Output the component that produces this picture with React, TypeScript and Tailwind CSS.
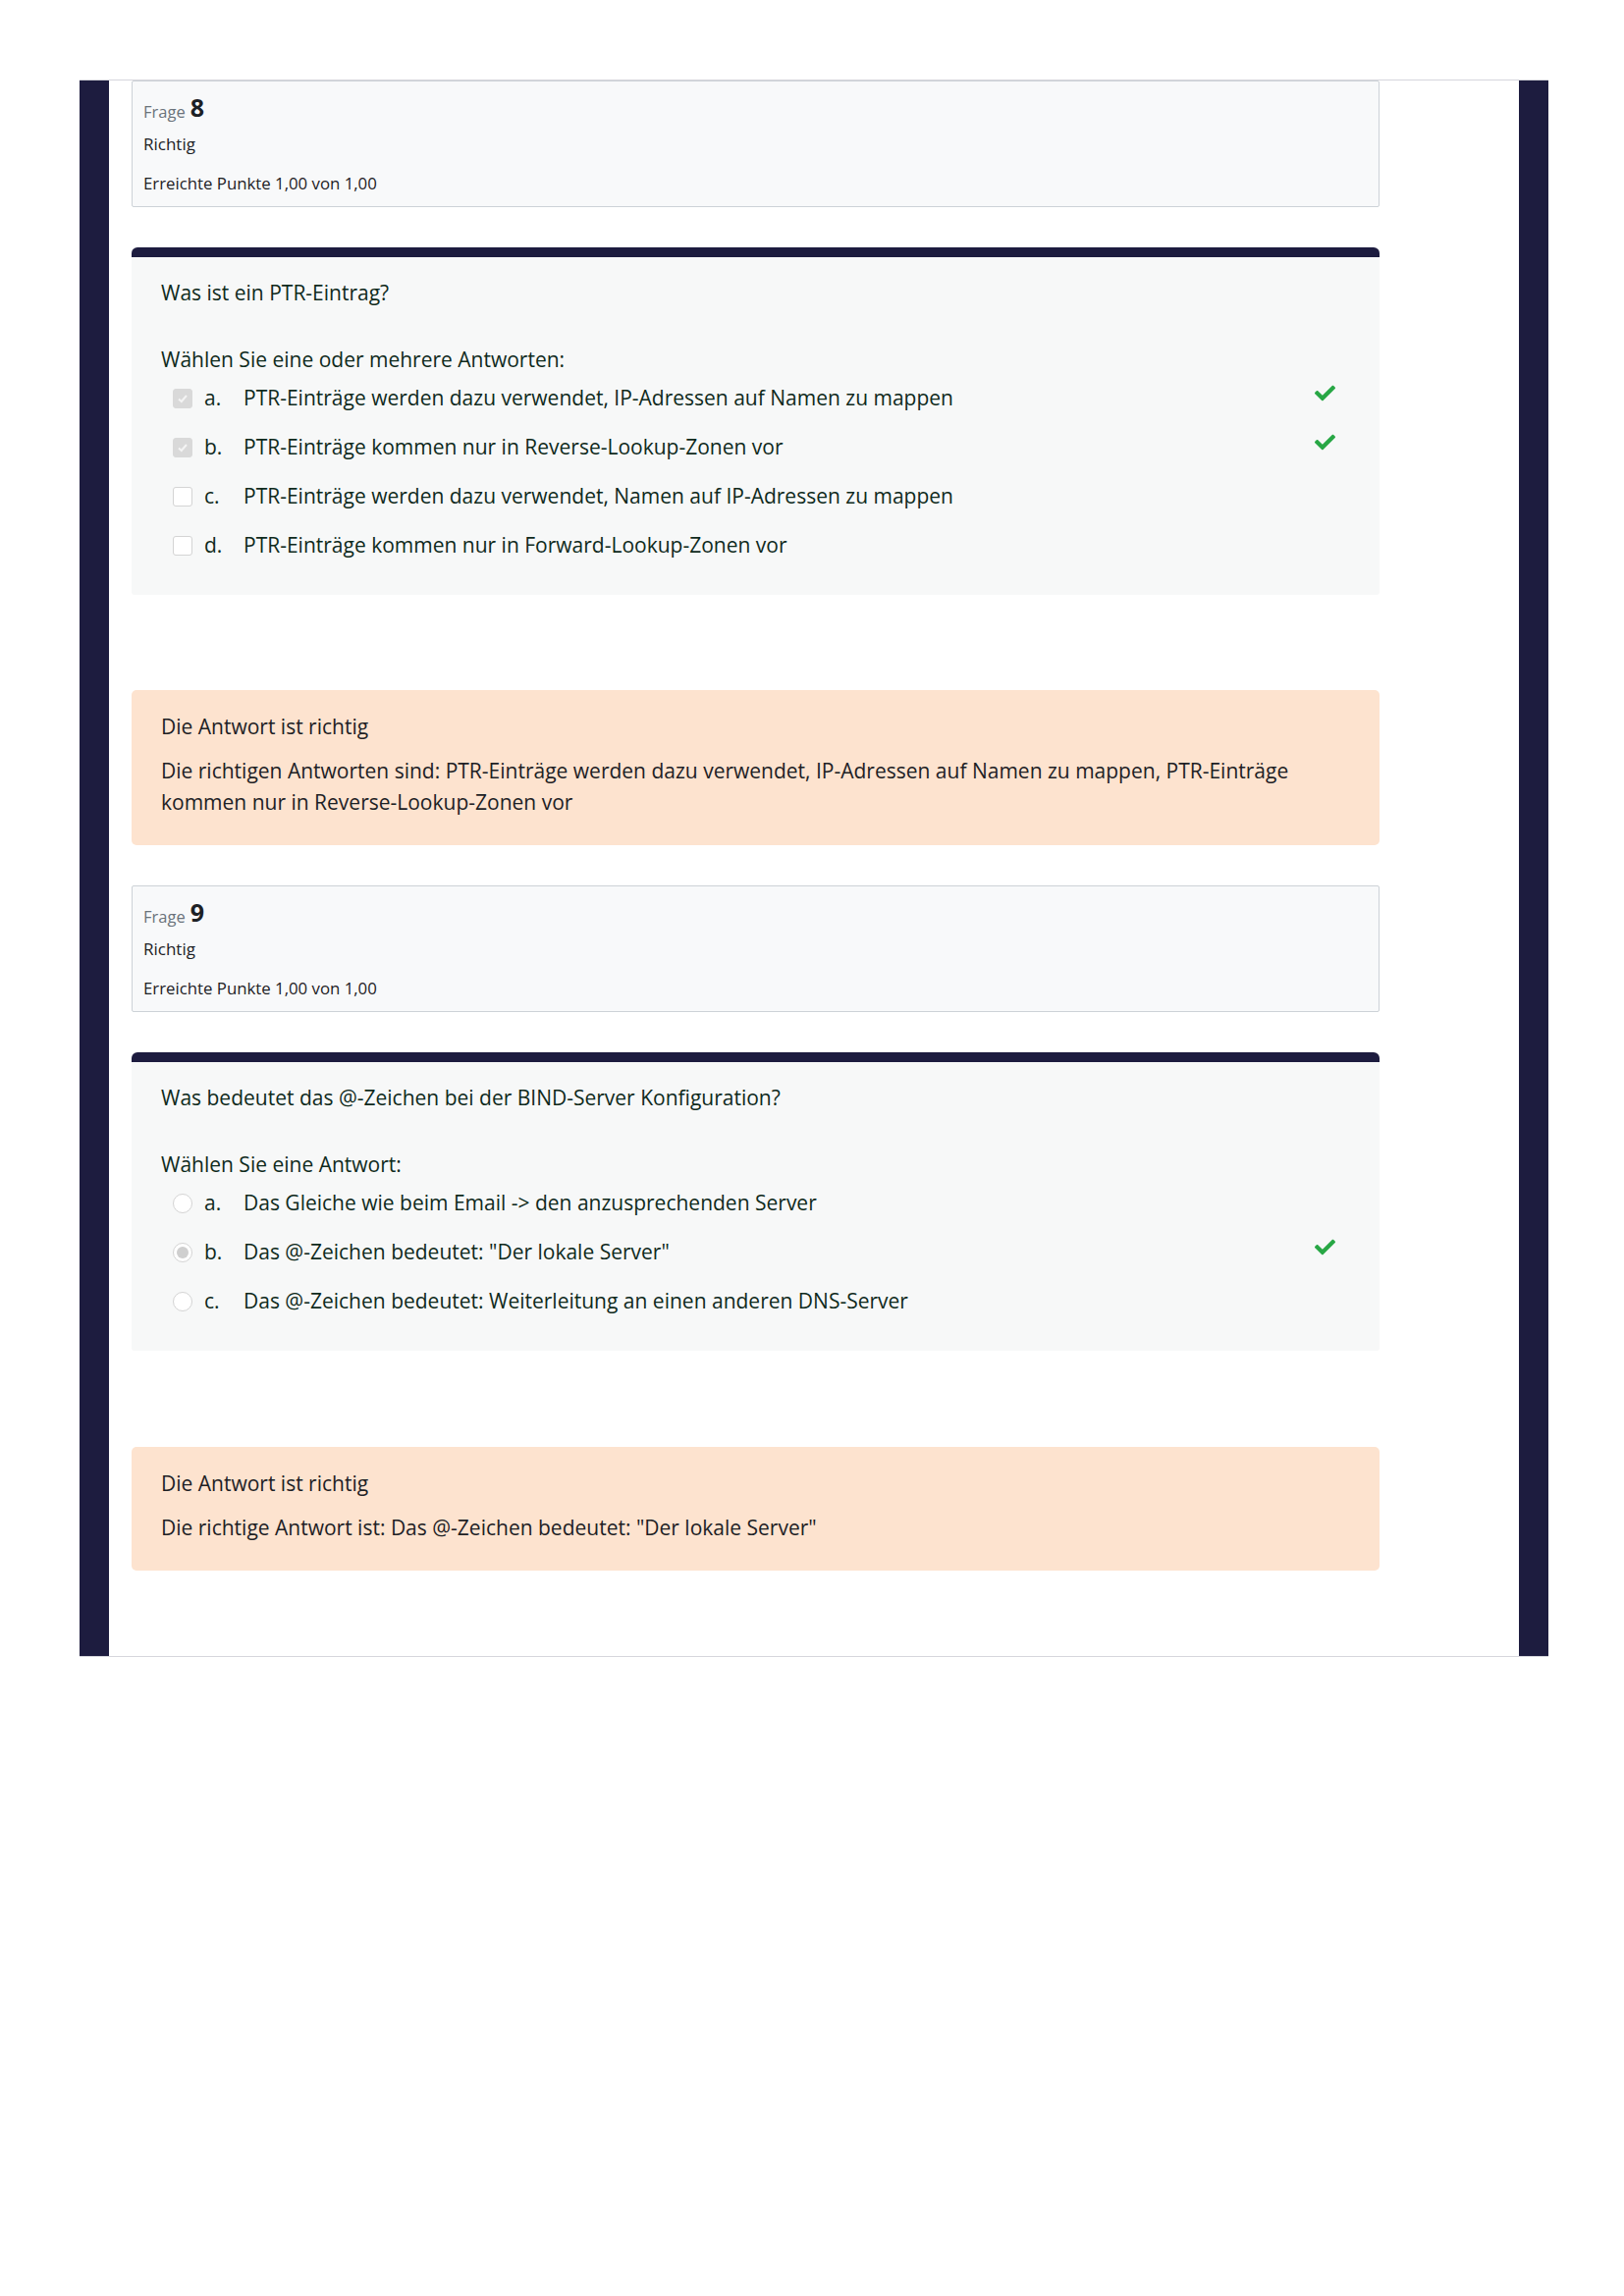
import React from 'react'
import { FaCheck } from 'react-icons/fa'

type Option = { letter: string; text: string; checked: boolean; correct: boolean }

function Box({ checked, radio }: { checked: boolean; radio: boolean }) {
  if (radio) {
    return (
      <span className="w-[20px] h-[20px] rounded-full border border-[#d4d4d4] bg-white flex items-center justify-center shrink-0">
        {checked && <span className="w-[12px] h-[12px] rounded-full bg-[#cfcfcf]" />}
      </span>
    )
  }
  return (
    <span
      className={`w-[20px] h-[20px] rounded-[3px] border flex items-center justify-center shrink-0 ${
        checked ? 'bg-[#d9d9d9] border-[#d9d9d9]' : 'bg-white border-[#d4d4d4]'
      }`}
    >
      {checked && (
        <svg width="12" height="12" viewBox="0 0 12 12">
          <path d="M2 6.5 L4.8 9 L10 3" fill="none" stroke="#f4f4f4" strokeWidth="2" />
        </svg>
      )}
    </span>
  )
}

function FrageBox({ nr }: { nr: number }) {
  return (
    <div className="h-[129px] border border-[#cdd2d7] bg-[#f8f9fa] rounded-[2px] px-[11px] pt-[15px] text-[#1d2125]">
      <div className="h-[24px] flex items-end leading-none">
        <span className="text-[16.5px] text-[#6a737b] mr-[5px]">Frage</span>
        <span className="text-[25px] font-bold text-[#1d2125]">{nr}</span>
      </div>
      <div className="mt-[13px] h-[24px] leading-[24px] text-[17px]">Richtig</div>
      <div className="mt-[16px] h-[24px] leading-[24px] text-[16.8px]">Erreichte Punkte 1,00 von 1,00</div>
    </div>
  )
}

function QuestionCard({
  question,
  prompt,
  options,
  radio,
}: {
  question: string
  prompt: string
  options: Option[]
  radio: boolean
}) {
  return (
    <div className="border-t-[10px] border-[#1d1c3f] rounded-t-[6px] rounded-b-[3px] bg-[#f7f8f8] pl-[30px] pr-[45px] pt-[21px] pb-[25px] text-[#0f2a1c]">
      <div className="h-[30px] leading-[30px] text-[21px]">{question}</div>
      <div className="mt-[38px] h-[30px] leading-[30px] text-[21px]">{prompt}</div>
      <div>
        {options.map((o) => (
          <div key={o.letter} className="h-[50px] flex items-center pl-[12px] text-[21px]">
            <Box checked={o.checked} radio={radio} />
            <span className="ml-[12px] w-[40px]">{o.letter}</span>
            <span>{o.text}</span>
            {o.correct && <FaCheck className="ml-auto -mt-[11px] text-[#28a745]" size={21} />}
          </div>
        ))}
      </div>
    </div>
  )
}

function Feedback({ lines }: { lines: string }) {
  return (
    <div className="bg-[#fde3cf] rounded-[5px] pl-[30px] pr-[40px] pt-[21px] pb-[28px] text-[21px] leading-[32px] text-[#1d2125]">
      <p>Die Antwort ist richtig</p>
      <p className="mt-[13px]">{lines}</p>
    </div>
  )
}

export default function App() {
  return (
    <div className="min-h-[2339px] bg-white pt-[81px] px-[81px]" style={{ fontFamily: '"Open Sans", "Noto Sans", sans-serif' }}>
      <div className="flex w-[1496px] h-[1607px] border-t border-b border-[#d6d6dc]">
        <div className="w-[30px] bg-[#1d1c3f]" />
        <div className="flex-1 bg-white pl-[23px]">
          <div className="w-[1271px]">
            <FrageBox nr={8} />
            <div className="mt-[41px]">
              <QuestionCard
                question="Was ist ein PTR-Eintrag?"
                prompt="Wählen Sie eine oder mehrere Antworten:"
                radio={false}
                options={[
                  { letter: 'a.', text: 'PTR-Einträge werden dazu verwendet, IP-Adressen auf Namen zu mappen', checked: true, correct: true },
                  { letter: 'b.', text: 'PTR-Einträge kommen nur in Reverse-Lookup-Zonen vor', checked: true, correct: true },
                  { letter: 'c.', text: 'PTR-Einträge werden dazu verwendet, Namen auf IP-Adressen zu mappen', checked: false, correct: false },
                  { letter: 'd.', text: 'PTR-Einträge kommen nur in Forward-Lookup-Zonen vor', checked: false, correct: false },
                ]}
              />
            </div>
            <div className="mt-[97px]">
              <Feedback lines="Die richtigen Antworten sind: PTR-Einträge werden dazu verwendet, IP-Adressen auf Namen zu mappen, PTR-Einträge kommen nur in Reverse-Lookup-Zonen vor" />
            </div>
            <div className="mt-[41px]">
              <FrageBox nr={9} />
            </div>
            <div className="mt-[41px]">
              <QuestionCard
                question="Was bedeutet das @-Zeichen bei der BIND-Server Konfiguration?"
                prompt="Wählen Sie eine Antwort:"
                radio
                options={[
                  { letter: 'a.', text: 'Das Gleiche wie beim Email -> den anzusprechenden Server', checked: false, correct: false },
                  { letter: 'b.', text: 'Das @-Zeichen bedeutet: "Der lokale Server"', checked: true, correct: true },
                  { letter: 'c.', text: 'Das @-Zeichen bedeutet: Weiterleitung an einen anderen DNS-Server', checked: false, correct: false },
                ]}
              />
            </div>
            <div className="mt-[98px]">
              <Feedback lines={'Die richtige Antwort ist: Das @-Zeichen bedeutet: "Der lokale Server"'} />
            </div>
          </div>
        </div>
        <div className="w-[30px] bg-[#1d1c3f]" />
      </div>
    </div>
  )
}
